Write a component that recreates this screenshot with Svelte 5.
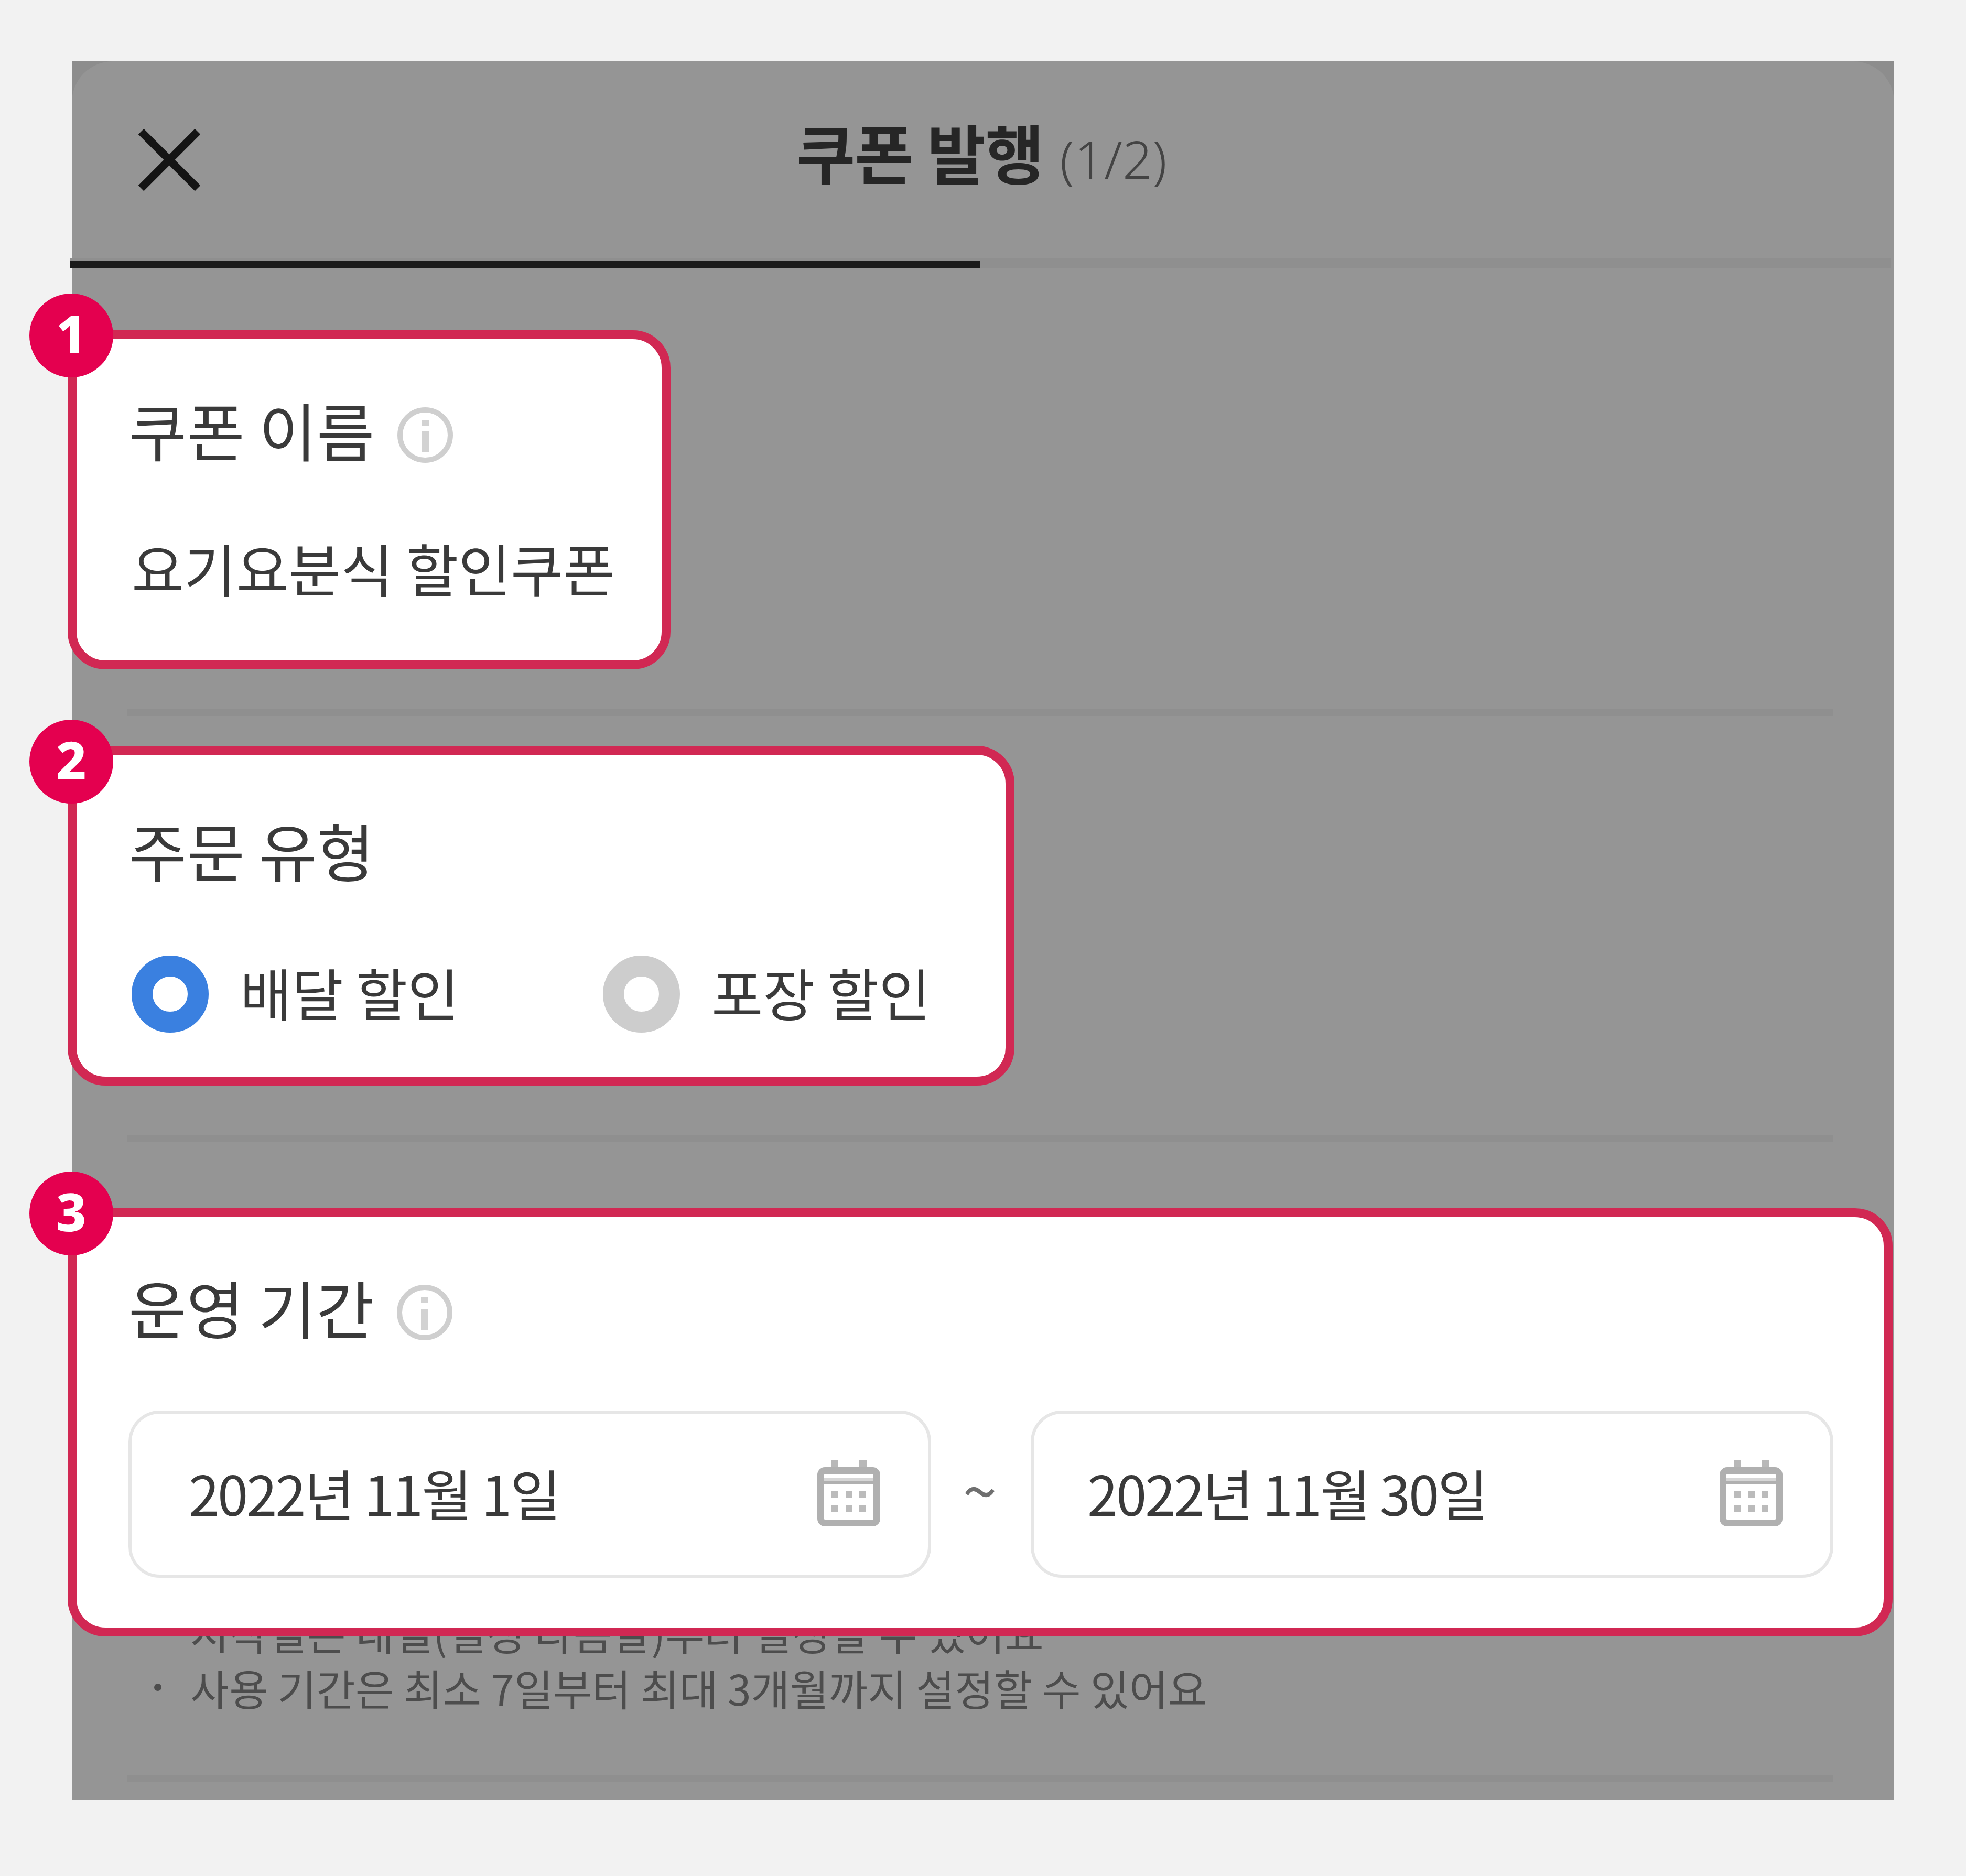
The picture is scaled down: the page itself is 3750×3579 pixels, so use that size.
<script lang="ts">
  const hints = [
    "시작일은 내일(설정 다음날)부터 설정할 수 있어요",
    "사용 기간은 최소 7일부터 최대 3개월까지 설정할 수 있어요",
  ];
  const orderTypes = [
    { text: "배달 할인", selected: true },
    { text: "포장 할인", selected: false },
  ];
  const dates = ["2022년 11월 1일", "2022년 11월 30일"];
</script>

{#snippet infoIcon()}
  <svg class="info" viewBox="0 0 120 120" aria-hidden="true">
    <circle cx="60" cy="60" r="48" fill="none" stroke="#cfcfcf" stroke-width="10" />
    <rect x="53" y="31" width="14" height="11" fill="#d2d2d2" />
    <rect x="53" y="53" width="14" height="40" fill="#d2d2d2" />
  </svg>
{/snippet}

{#snippet calendarIcon()}
  <svg class="calendar" viewBox="0 0 120 127" aria-hidden="true">
    <rect x="27" y="0" width="13" height="16" fill="#b8b8b8" />
    <rect x="80" y="0" width="14" height="16" fill="#b8b8b8" />
    <rect x="6.500" y="20.500" width="107" height="100" rx="8" fill="#fff" stroke="#b0b0b0" stroke-width="13" />
    <rect x="13" y="34" width="94" height="6" fill="#d6d6d6" />
    <rect x="13" y="40" width="94" height="7" fill="#b0b0b0" />
    {#each [60, 87] as y}
      {#each [27, 54, 80] as x}
        <rect {x} {y} width="13" height="13" fill="#bbb" />
      {/each}
    {/each}
  </svg>
{/snippet}

<div class="page">
  <div class="panel">
    <div class="head-corners">
      <header class="sheet-head">
        <svg class="close" viewBox="0 0 118 118" aria-hidden="true">
          <path d="M5 5 L113 113 M113 5 L5 113" stroke="#141414" stroke-width="15" fill="none" />
        </svg>
        <h1>쿠폰 발행 <span>(1/2)</span></h1>
      </header>
    </div>
    <div class="track"><div class="bar"></div></div>

    <section class="card card-name">
      <span class="badge">1</span>
      <div class="label">쿠폰 이름 {@render infoIcon()}</div>
      <div class="value">요기요분식 할인쿠폰</div>
    </section>

    <div class="divider first"></div>

    <section class="card card-type">
      <span class="badge">2</span>
      <div class="label">주문 유형</div>
      <div class="options">
        {#each orderTypes as option}
          <div class="option">
            <span class={option.selected ? "radio on" : "radio"}></span>
            <span class="option-text">{option.text}</span>
          </div>
        {/each}
      </div>
    </section>

    <div class="divider second"></div>

    <section class="card card-period">
      <span class="badge">3</span>
      <div class="label">운영 기간 {@render infoIcon()}</div>
      <div class="range">
        <div class="field">
          <span class="date">{dates[0]}</span>
          {@render calendarIcon()}
        </div>
        <span class="tilde">~</span>
        <div class="field">
          <span class="date">{dates[1]}</span>
          {@render calendarIcon()}
        </div>
      </div>
    </section>

    <ul class="hints">
      {#each hints as hint}
        <li>{hint}</li>
      {/each}
    </ul>

    <div class="divider last"></div>
  </div>
</div>

<style>
  :global(body) {
    margin: 0;
    background: #f2f2f2;
  }

  .page {
    width: 3750px;
    height: 3579px;
    box-sizing: border-box;
    padding: 117px 137px 145px;
    font-family: "Noto Sans CJK KR", "Noto Sans", sans-serif;
    color: #3a3a3a;
  }

  .panel {
    width: 3476px;
    height: 3317px;
    background: #959595;
    display: flex;
    flex-direction: column;
  }

  .head-corners {
    background: #8d8d8d;
  }

  .sheet-head {
    height: 375px;
    box-sizing: border-box;
    padding: 0 5px 20px 0;
    display: flex;
    align-items: center;
    justify-content: center;
    position: relative;
    background: #959595;
    border-radius: 78px 78px 0 0;
  }

  .close {
    position: absolute;
    left: 127px;
    top: 129px;
    width: 118px;
    height: 118px;
  }

  h1 {
    margin: 0;
    font-size: 122px;
    line-height: 130px;
    font-weight: 700;
    color: #262626;
    letter-spacing: -1px;
  }

  h1 span {
    margin-left: 4px;
    font-size: 100px;
    font-weight: 300;
    color: #444;
    letter-spacing: 0;
    font-family: "Noto Sans", sans-serif;
  }

  .track {
    height: 19px;
    box-sizing: border-box;
    padding-top: 5px;
    background: #8f8f8f;
    margin-left: -3px;
    margin-right: 7px;
  }

  .bar {
    width: 1735px;
    height: 15px;
    background: #1b1b1b;
  }

  .card {
    position: relative;
    z-index: 1;
    margin-left: -8px;
    box-sizing: border-box;
    background: #fff;
    border: 17px solid #d12853;
    border-radius: 72px;
  }

  .card-name {
    width: 1150px;
    height: 647px;
    margin-top: 119px;
    padding: 107px 90px 0 100px;
  }

  .card-type {
    width: 1806px;
    height: 648px;
    padding: 116px 90px 0 100px;
  }

  .card-period {
    width: 3481px;
    height: 817px;
    padding: 106px 96px 0 99px;
  }

  .badge {
    position: absolute;
    left: -90px;
    top: -87px;
    width: 160px;
    height: 160px;
    border-radius: 50%;
    background: #e4004f;
    color: #fff;
    font-family: "Noto Sans", sans-serif;
    font-weight: 800;
    font-size: 100px;
    line-height: 150px;
    text-align: center;
  }

  .card-type .badge {
    top: -67px;
  }

  .label {
    display: flex;
    align-items: center;
    gap: 10px;
    height: 130px;
    font-size: 120px;
    line-height: 130px;
    white-space: pre;
  }

  .info {
    width: 120px;
    height: 120px;
    flex: none;
    margin-top: 22px;
  }

  .value {
    margin-top: 133px;
    padding-left: 5px;
    font-size: 108.500px;
    line-height: 130px;
    white-space: nowrap;
  }

  .options {
    display: flex;
    margin-top: 137px;
  }

  .option {
    flex: none;
    width: 899px;
    display: flex;
    align-items: center;
    gap: 60px;
    font-size: 107px;
    line-height: 147px;
    margin-left: 5px;
    margin-right: -5px;
    white-space: nowrap;
  }

  .option-text {
    margin-top: -10px;
  }

  .radio {
    width: 147px;
    height: 147px;
    box-sizing: border-box;
    border-radius: 50%;
    border: 40px solid #cdcdcd;
    background: #fff;
    flex: none;
  }

  .radio.on {
    border-color: #3a80e0;
  }

  .range {
    display: flex;
    align-items: center;
    margin-top: 133px;
  }

  .field {
    width: 1532px;
    height: 319px;
    box-sizing: border-box;
    border: 6px solid #e6e6e6;
    border-radius: 60px;
    display: flex;
    align-items: center;
    justify-content: space-between;
    padding: 0 91px 0 109px;
    font-size: 105px;
    letter-spacing: -3.200px;
    white-space: nowrap;
  }

  .field:last-child {
    padding-left: 102px;
  }

  .date {
    margin-top: -10px;
  }

  .tilde {
    width: 190px;
    margin: -24px 0 0 -2px;
    padding-right: 2px;
    text-align: center;
    color: #6f6f6f;
    font-size: 118px;
    line-height: 100px;
  }

  .calendar {
    width: 120px;
    height: 127px;
    flex: none;
    margin-top: -4px;
  }

  .hints {
    list-style: none;
    margin: -62px 0 0;
    padding: 0 0 0 226px;
    font-size: 80.600px;
    line-height: 106px;
    color: #4d4d4d;
    white-space: nowrap;
  }

  .hints li {
    position: relative;
  }

  .hints li::before {
    content: "";
    position: absolute;
    left: -69px;
    top: 46px;
    width: 14px;
    height: 14px;
    border-radius: 50%;
    background: #4d4d4d;
  }

  .divider {
    height: 13px;
    margin: 0 116px 0 105px;
    background: #8f8f8f;
  }

  .divider.first {
    margin-top: 76px;
    margin-bottom: 57px;
  }

  .divider.second {
    margin-top: 95px;
    margin-bottom: 126px;
  }

  .divider.last {
    margin-top: 114px;
  }
</style>
